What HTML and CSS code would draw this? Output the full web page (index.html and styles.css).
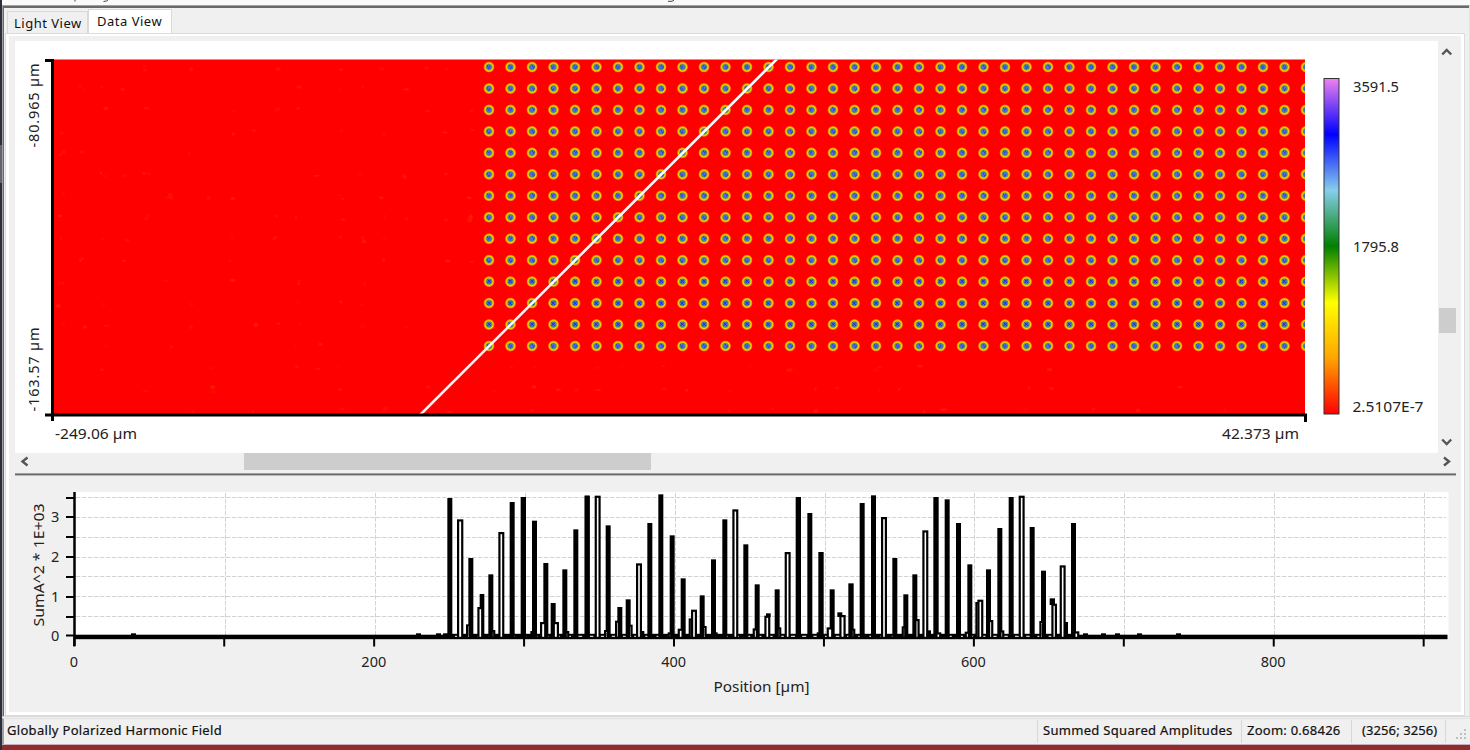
FILE: index.html
```html
<!DOCTYPE html>
<html lang="en">
<head>
<meta charset="utf-8">
<title>Globally Polarized Harmonic Field</title>
<link rel="stylesheet" href="styles.css">
</head>
<body>
<div class="desktop">
  <div class="backdrop"></div>
  <div class="window">
    <div class="caption">
      <svg width="700" height="5" viewBox="0 0 700 5"><path d="M73 0V1.500M101.500 1.500L104.500 1L106 0M666 1.300H670L672 0" stroke="#444" fill="none"/></svg>
    </div>
    <div class="document">
      <div class="tabs">
        <div class="tab"><span class="light-label">Light View</span></div>
        <div class="tab active"><span class="data-label">Data View</span></div>
      </div>
      <div class="page">
        <div class="viewer">
          <svg class="map" width="1423" height="412" viewBox="15 41 1423 412">
            <defs>
              <radialGradient id="spot">
                <stop offset="0" stop-color="#7a68f4"/>
                <stop offset=".27" stop-color="#4a62e6"/>
                <stop offset=".44" stop-color="#4a9080"/>
                <stop offset=".57" stop-color="#a8b818"/>
                <stop offset=".68" stop-color="#f0d800"/>
                <stop offset=".8" stop-color="#ff9800"/>
                <stop offset="1" stop-color="#ff0000"/>
              </radialGradient>
              <linearGradient id="scale" x1="0" y1="0" x2="0" y2="1">
                <stop offset="0" stop-color="#ee82ee"/>
                <stop offset=".1667" stop-color="#0000ff"/>
                <stop offset=".3333" stop-color="#87ceeb"/>
                <stop offset=".5" stop-color="#008000"/>
                <stop offset=".6667" stop-color="#ffff00"/>
                <stop offset=".8333" stop-color="#ffa500"/>
                <stop offset="1" stop-color="#ff0000"/>
              </linearGradient>
              <clipPath id="field"><rect x="54" y="59.500" width="1251" height="354.500"/></clipPath>
            </defs>
            <g clip-path="url(#field)">
              <rect x="54" y="59" width="1251" height="355" fill="#f00"/>
              <g id="noise"></g>
              <g id="spots"></g>
              <path d="M420 415L778 58" stroke="#fff" stroke-width="2.600"/>
            </g>
            <path d="M45 60.500H54M52.500 59V421M45 415H1307M1305.500 414V422" stroke="#000" stroke-width="3" fill="none"/>
            <rect x="1324" y="78.500" width="15" height="335.500" fill="url(#scale)" stroke="#333"/>
            <g class="map-text">
              <text x="1353" y="92" textLength="46" lengthAdjust="spacingAndGlyphs">3591.5</text>
              <text x="1353" y="252" textLength="46" lengthAdjust="spacingAndGlyphs">1795.8</text>
              <text x="1352.500" y="412" textLength="71" lengthAdjust="spacingAndGlyphs">2.5107E-7</text>
              <text x="55" y="439" textLength="82" lengthAdjust="spacingAndGlyphs">-249.06 µm</text>
              <text x="1222" y="439" textLength="77" lengthAdjust="spacingAndGlyphs">42.373 µm</text>
              <text transform="translate(38.500 147.500) rotate(-90)" textLength="84">-80.965 µm</text>
              <text transform="translate(38.500 411.500) rotate(-90)" textLength="84">-163.57 µm</text>
            </g>
          </svg>
          <div class="scroll-v">
            <svg width="18" height="17" viewBox="0 0 18 17"><path d="M4.200 13.500L8.700 9L13.200 13.500" class="arrow"/></svg>
            <div class="thumb-v"></div>
            <svg class="arrow-down" width="18" height="17" viewBox="0 0 18 17"><path d="M4.200 3.500L8.700 8L13.200 3.500" class="arrow"/></svg>
          </div>
        </div>
        <div class="scroll-h">
          <svg width="17" height="17" viewBox="0 0 17 17"><path d="M12.500 4.500L7.500 8.500L12.500 12.500" class="arrow"/></svg>
          <div class="thumb-h"></div>
          <svg class="arrow-right" width="17" height="17" viewBox="0 0 17 17"><path d="M5 4.500L10 8.500L5 12.500" class="arrow"/></svg>
        </div>
        <div class="splitter"></div>
        <svg class="chart" width="1441" height="234" viewBox="15 478 1441 234">
          <rect x="74" y="492" width="1374.500" height="146" fill="#fff"/>
          <g id="grid" stroke="#d3d3d3" stroke-dasharray="4.500 1.500"></g>
          <g id="trace"></g>
          <g id="ticks" stroke="#000" stroke-width="2"></g>
          <path d="M74.500 492V646" stroke="#000" stroke-width="2.500"/>
          <g class="chart-text" id="labels">
            <text x="713.500" y="691.500" textLength="96" lengthAdjust="spacingAndGlyphs">Position [µm]</text>
            <text transform="translate(43.500 626.500) rotate(-90)" textLength="123" lengthAdjust="spacingAndGlyphs">SumA^2 * 1E+03</text>
          </g>
        </svg>
      </div>
    </div>
    <div class="status">
      <div class="cell name"><span>Globally Polarized Harmonic Field</span></div>
      <div class="cell mode"><span>Summed Squared Amplitudes</span></div>
      <div class="cell zoom"><span>Zoom: 0.68426</span></div>
      <div class="cell size"><span>(3256; 3256)</span></div>
      <div class="cell grip"><svg width="12" height="12" viewBox="0 0 12 12"><path d="M9 0h2v2h-2zM5 4h2v2h-2zM9 4h2v2h-2zM1 8h2v2h-2zM5 8h2v2h-2zM9 8h2v2h-2z" fill="#bfbfbf"/></svg></div>
    </div>
    <div class="footer"></div>
  </div>
</div>
<script src="plots.js"></script>
</body>
</html>
```
FILE: styles.css
```css
* { box-sizing: border-box; }
body {
  margin: 0;
  width: 1470px;
  height: 750px;
  overflow: hidden;
  background: #f0f0f0;
  font-family: "Noto Sans", "Open Sans", sans-serif;
  font-size: 13px;
  color: #111;
}
svg { display: block; }
.desktop { display: flex; height: 750px; }
.backdrop {
  flex: none;
  width: 2px;
  background: linear-gradient(#2b2e3c 145px, #62656f 145px, #62656f 183px, #2b2e3c 183px);
}
.window {
  flex: 1;
  display: flex;
  flex-direction: column;
  background: #f0f0f0;
}
.caption { height: 5px; background: #fafafa; overflow: hidden; }
.document {
  display: flex;
  flex-direction: column;
  height: 712px;
  border-top: 1px solid #a0a0a0;
  border-left: 1px solid #a0a0a0;
  box-shadow: inset 1px 2px 0 #696969;
  border-right: 1px solid #e3e3e3;
  border-bottom: 1px solid #d9d9d9;
  padding: 3px 3px 0 3px;
}
.tabs { display: flex; align-items: flex-end; height: 25px; padding-left: 1px; }
.tab {
  width: 81px;
  height: 23px;
  border: 1px solid #d9d9d9;
  border-bottom: 0;
  padding: 2px 0 0 6px;
  line-height: 18px;
  white-space: nowrap;
}
.tab.active { width: 84px; height: 25px; background: #fff; padding: 2px 0 0 8px; }
.light-label { letter-spacing: .5px; }
.data-label { letter-spacing: .5px; }
.page {
  width: 1458px;
  height: 681px;
  border: 3px solid #fff;
  border-top-width: 2px;
  outline: 1px solid #dcdcdc;
  padding: 5px 0 0 6px;
}
.viewer { display: flex; }
.map { background: #fff; flex: none; }
.scroll-v { display: flex; flex: none; flex-direction: column; width: 18px; height: 412px; background: #f0f0f0; }
.thumb-v { width: 17px; height: 25px; margin: 250px 0 0 1px; background: #cdcdcd; }
.arrow-down { margin-top: auto; }
.arrow { fill: none; stroke: #555; stroke-width: 2.4; }
.scroll-h { display: flex; width: 1441px; height: 17px; }
.thumb-h { width: 407px; height: 17px; margin-left: 212px; background: #cdcdcd; }
.arrow-right { margin-left: auto; }
.splitter {
  width: 1441px;
  height: 5px;
  margin: 3px 0 0;
  border-top: 1px solid #a0a0a0;
  box-shadow: inset 0 1px 0 #696969, inset 0 2px 0 #b8b8b8;
}
.map-text, .chart-text { font-size: 14.5px; fill: #222; }
.status {
  display: flex;
  align-items: center;
  height: 26px;
  margin-top: 1px;
  border-left: 2px solid #a0a0a0;
  border-top: 1px solid #e2e2e2;
  letter-spacing: .31px;
  -webkit-text-stroke: .2px #111;
}
.cell { height: 23px; line-height: 21px; white-space: nowrap; border-right: 1px solid #d7d7d7; }
.name { width: 1034px; padding-left: 3px; }
.mode { width: 204px; padding-left: 5px; }
.zoom { width: 110px; padding-left: 5px; letter-spacing: .25px; }
.size { width: 94px; padding-left: 10px; letter-spacing: .1px; }
.grip { border: 0; padding: 9px 0 0 9px; }
.footer { flex: 1; background: #922b2d; border-top: 1px solid #c8b0b8; }
```
FILE: plots.js
```js
const NS = "http://www.w3.org/2000/svg";
function add(parentId, tag, attrs, text) {
  const node = document.createElementNS(NS, tag);
  for (const key in attrs) node.setAttribute(key, attrs[key]);
  if (text !== undefined) node.textContent = text;
  document.getElementById(parentId).appendChild(node);
}

let seed = 7;
function random() {
  seed = (seed * 16807) % 2147483647;
  return seed / 2147483647;
}

// Weak background response of the unpatterned area
for (let i = 0; i < 420; i++) {
  const x = 58 + Math.floor(random() * 57) * 21.5 + random() * 6;
  const y = 67 + Math.floor(random() * 17) * 21.46 + random() * 5 - 2;
  add("noise", "ellipse", { cx: x, cy: y, rx: 1 + random() * 2, ry: 1 + random(), fill: "#ff3000", opacity: 0.15 + random() * 0.35 });
}

// Periodic pillars
for (let row = 0; row < 14; row++) {
  for (let col = 0; col < 39; col++) {
    const x = 489 + col * 21.5;
    const y = 67 + row * 21.46;
    add("spots", "circle", { cx: x, cy: y, r: 5.8, fill: "url(#spot)" });
    const px = Math.floor(x), py = Math.floor(y);
    const d = row > 9 && row !== 13
      ? `M${px - 1.5} ${py - 1.5}l3.5 3.5m0 -3.5l-3.5 3.5`
      : `M${px - 2 + (col % 3)} ${py - 1 + (row % 2)}h1m1 1h1m-2 1h1`;
    add("spots", "path", { d, stroke: "#1818c8", "stroke-width": 1, opacity: 0.8, fill: "none" });
  }
}

// Chart grid, ticks and tick labels
[497.5, 517.5, 537.5, 557.5, 576.5, 596.5, 616.5].forEach(y => add("grid", "path", { d: `M76 ${y}H1446` }));
for (let i = 1; i < 10; i++) add("grid", "path", { d: `M${Math.round(75 + i * 149.9) + 0.5} 493V635` });
for (let i = 0; i < 10; i++) add("ticks", "path", { d: `M${74.3 + i * 149.93} 636V646.5` });
[498, 517, 537, 557, 577, 597, 617, 635.5].forEach(y => add("ticks", "path", { d: `M66 ${y}H75` }));
[[3, 522], [2, 562], [1, 602], [0, 641]].forEach(([v, y]) => add("labels", "text", { x: 51, y }, v));
[0, 200, 400, 600, 800].forEach((v, i) => add("labels", "text", { x: 74 + i * 299.8, y: 666.5, "text-anchor": "middle" }, v));

// Trace segments per panel: [left, right, top], in thirds of a pixel from (origin, 485)
const panels = [
  { origin: 430,
    solid: [[52,67,39],[115,130,219],[149,163,327],[175,190,268],[239,254,51],[272,288,36],[306,321,107],[340,355,234],[362,377,354],[397,412,253],[430,445,133],[464,479,32]],
    open: [[81,100,103],[108,122,418],[142,160,366],[182,196,435],[205,223,141],[301,313,438],[330,349,411],[368,387,411],[404,418,438]] },
  { origin: 580,
    solid: [[14,29,32],[77,92,121],[112,127,366],[137,152,343],[202,217,114],[235,250,28],[269,284,151],[302,317,280],[359,374,331],[393,408,223],[427,442,103]],
    open: [[44,62,32],[72,86,435],[105,120,407],[144,158,419],[168,186,235],[180,193,438],[263,277,442],[293,311,431],[326,341,400],[333,351,374],[366,380,423],[400,413,442]] },
  { origin: 730,
    solid: [[40,55,178],[74,89,298],[108,122,385,396],[134,149,313],[197,213,36],[232,247,84],[265,281,201],[299,314,313],[322,337,382,396],[355,371,295],[389,404,54],[423,438,31]],
    open: [[7,25,73],[68,84,430],[103,121,392],[140,154,427],[164,182,201],[260,272,442],[290,310,427],[328,347,390],[362,376,431],[453,471,96]] },
  { origin: 880,
    solid: [[37,52,219],[70,85,328],[97,112,268],[160,176,36],[194,209,43],[228,243,114],[262,277,238],[318,333,253],[352,367,129],[386,401,36],[449,464,126],[483,498,257],[509,525,340,360],[573,588,114]],
    open: [[65,79,424],[103,119,402],[127,145,136],[140,153,436],[166,184,442],[254,270,440],[286,309,351],[292,310,344],[324,340,405],[358,373,436],[416,434,32],[478,492,408],[514,531,356],[539,557,241],[552,564,411],[580,598,439]] }
];
add("trace", "rect", { x: 74, y: 634.7, width: 1373.5, height: 4.5, fill: "#000" });
add("trace", "rect", { x: 449, y: 633.8, width: 628, height: 2, fill: "#000" });
for (let i = 0; i < 56; i++) add("trace", "rect", { x: 455 + i * 11.2, y: 635.8, width: 4, height: 1, fill: "#fff" });
panels.forEach(({ origin, solid }) => solid.forEach(([l, r, t, b]) => {
  const y = 485 + t / 3;
  add("trace", "rect", { x: origin + l / 3, y, width: (r - l) / 3, height: (b ? 485 + b / 3 : 638) - y, fill: "#000" });
}));
panels.forEach(({ origin, open }) => open.forEach(([l, r, t]) => {
  const x = origin + l / 3, y = 485 + t / 3, w = (r - l) / 3;
  add("trace", "rect", { x: x + 1.1, y: y + 1.1, width: w - 2.2, height: 637.8 - y - 1, fill: "#fff", stroke: "#000", "stroke-width": 2.2 });
}));
[131, 416, 436, 443, 1083, 1101, 1115, 1137, 1176].forEach(x => add("trace", "rect", { x, y: 633.3, width: 5, height: 2, fill: "#000" }));
```
